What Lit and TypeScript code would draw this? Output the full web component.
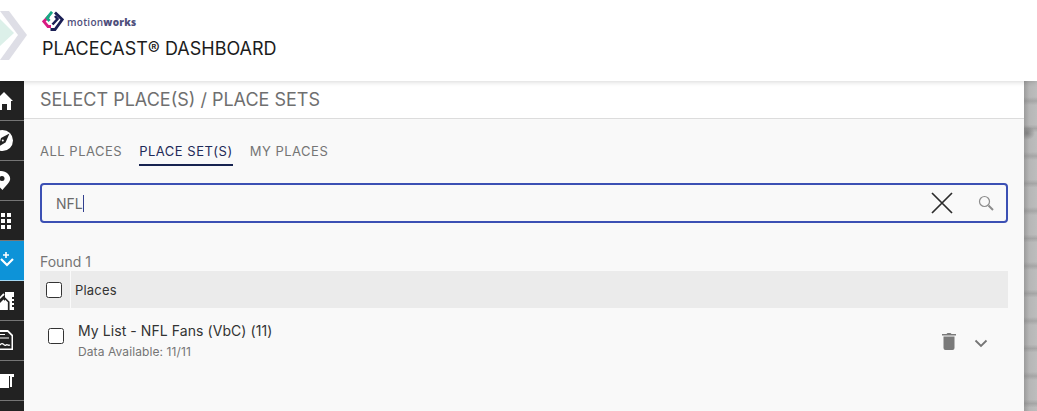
import { LitElement, html, css, svg } from "lit";
import { customElement } from "lit/decorators.js";

const navIcons = [
  svg`<path d="M-4 19 L4 11 L13 20 L11 20 L11 29 L7 29 L7 23 L2 23 L2 29 L-2 29 Z" fill="#fff"/>`,
  svg`<circle cx="2.500" cy="19.500" r="10.500" fill="#fff"/><path d="M9.500 12.500 L5.500 21.500 L-1.500 25.500 L1 17 Z" fill="#222"/><circle cx="2.800" cy="19.500" r="1" fill="#fff"/>`,
  svg`<path d="M1 10 C-5 10 -6 16 -5 19 C-4 22 -1 26 2.500 29 C5 26 9 22 10 19 C11 15 7 10 1 10 Z" fill="#fff"/><circle cx="2" cy="17.500" r="2.500" fill="#222"/>`,
  svg`<g fill="#fff"><rect x="1" y="12" width="4" height="4"/><rect x="7" y="12" width="4" height="4"/><rect x="1" y="18" width="4" height="4"/><rect x="7" y="18" width="4" height="4"/><rect x="1" y="24" width="4" height="4"/><rect x="7" y="24" width="4" height="4"/></g>`,
  svg`<path d="M1 18 L7 24 L13 18" fill="none" stroke="#fff" stroke-width="2.200"/><path d="M6 11 V17 M3 14 H9" stroke="#fff" stroke-width="1.600"/>`,
  svg`<path d="M5 11 H14 V29 H5 Z" fill="#fff"/><path d="M-1 18 L4 13" stroke="#fff" stroke-width="1.800"/><path d="M-1 23 L3.500 18.500 L7 22 V29 H-1 Z" fill="#fff"/><path d="M-1 20.500 L3.500 16 L8.700 21 V29" fill="none" stroke="#222" stroke-width="1.700"/><g fill="#222"><rect x="12" y="16" width="2" height="2"/><rect x="12" y="20" width="2" height="2"/><rect x="12" y="24" width="2" height="2"/></g>`,
  svg`<path d="M-1 9 H8 L13 14 V29 H-1 Z" fill="#fff"/><path d="M0 11 H7.500 L11.500 15 V27.500 H0 Z" fill="#222"/><path d="M0 13.500 H5 M0 17 H9" stroke="#fff" stroke-width="1.200"/><path d="M0 24 C3 20 4 26 6 24 C7 23 8 25 10 24" stroke="#fff" stroke-width="1.300" fill="none"/>`,
  svg`<path d="M0 13 H14 V16 H12 V26 H10 V24 H9 V27 H0 Z" fill="#fff"/><rect x="9" y="15" width="1" height="9" fill="#222"/>`,
];

@customElement("app-root")
export class AppRoot extends LitElement {
  static styles = css`
    :host {
      display: block;
      width: 1037px;
      height: 411px;
      overflow: hidden;
      position: relative;
      font-family: Inter, "Liberation Sans", sans-serif;
      background: #b5b5b5;
    }
    * { box-sizing: border-box; }
    .header {
      height: 81px;
      background: #fff;
      position: relative;
      z-index: 2;
      padding: 11px 0 0 42px;
      box-shadow: 0 1px 5px rgba(0, 0, 0, 0.16);
      overflow: hidden;
    }
    .watermark { position: absolute; left: 0; top: 0; }
    .brand { display: flex; align-items: center; gap: 3px; height: 21px; position: relative; }
    .brand-name {
      font-size: 10px;
      letter-spacing: 0.25px;
      color: #4f4f7c;
      font-family: "Open Sans", "Liberation Sans", sans-serif;
      font-weight: 600;
    }
    .brand-name b { font-weight: 800; }
    .title {
      position: relative;
      margin-top: 7px;
      font-size: 18px;
      line-height: 20px;
      color: #1c1c1c;
    }
    .body { display: flex; height: 330px; }
    .rail { width: 24px; background: #222; flex: none; display: flex; flex-direction: column; }
    .nav {
      height: 40px;
      flex: none;
      border-bottom: 1px solid #757575;
      overflow: hidden;
    }
    .nav.active { background: #0d93d8; border-bottom-color: #a6d8f2; }
    .nav svg { display: block; }
    .panel { width: 1000px; flex: none; background: #f9f9f9; display: flex; flex-direction: column; }
    .panel-head {
      height: 38px;
      background: #fff;
      border-bottom: 1px solid #dcdcdc;
      padding: 9px 0 0 16px;
      font-size: 18px;
      line-height: 20px;
      color: #6f6f6f;
      white-space: nowrap;
    }
    .tabs { display: flex; gap: 17px; padding: 22px 0 0 16px; height: 64px; }
    .tab {
      font-size: 13px;
      line-height: 20px;
      height: 25px;
      color: #757575;
      letter-spacing: 0.5px;
      white-space: nowrap;
    }
    .tab.active { color: #1f2a58; border-bottom: 2px solid #172350; }
    .search {
      margin-left: 16px;
      width: 968px;
      height: 40px;
      border: 2px solid #3c50b4;
      border-radius: 4px;
      display: flex;
      align-items: center;
      padding: 0 12px 0 14px;
    }
    .query { font-size: 14px; color: #6a6a6a; display: flex; align-items: center; flex: 1; }
    .caret { width: 1px; height: 17px; background: #33408f; }
    .clear { margin-right: 25px; display: block; }
    .lens { display: block; }
    .found {
      margin: 31px 0 0 16px;
      font-size: 14px;
      line-height: 16px;
      color: #757575;
    }
    .table-head {
      margin: 1px 0 0 16px;
      width: 968px;
      height: 37px;
      background: #ebebeb;
      display: flex;
      align-items: center;
      flex: none;
    }
    .check-cell {
      width: 31px;
      height: 100%;
      border-right: 1px solid #fafafa;
      display: flex;
      align-items: center;
      padding-left: 6px;
      flex: none;
    }
    .check {
      width: 16px;
      height: 16px;
      border: 1.2px solid #333;
      border-radius: 2.500px;
      background: #fff;
      flex: none;
    }
    .places { margin-left: 4px; font-size: 13px; color: #333; letter-spacing: 0.2px; }
    .row { margin-left: 24px; width: 960px; display: flex; align-items: flex-start; flex: none; }
    .row .check { margin-top: 20px; }
    .row-text { margin: 14px 0 0 14px; flex: 1; }
    .row-title { font-size: 14px; line-height: 18px; color: #333; letter-spacing: 0.07px; }
    .row-sub { font-size: 12px; line-height: 14px; margin-top: 5px; color: #757575; letter-spacing: 0.1px; }
    .trash { display: block; margin: 23px 17px 0 0; }
    .chevron { display: block; margin: 31px 20px 0 0; }
    .map {
      flex: 1;
      background:
        radial-gradient(ellipse 8px 7px at 3px 52px, rgba(90, 90, 90, 0.55), transparent),
        repeating-linear-gradient(180deg, rgba(110, 110, 110, 0) 0, rgba(110, 110, 110, 0.28) 4px, rgba(110, 110, 110, 0) 8px, rgba(110, 110, 110, 0) 27.500px),
        linear-gradient(90deg, #9c9c9c, #b6b6b6 40%, #bdbdbd);
      background-position: 0 0, 0 71px, 0 0;
    }
  `;

  render() {
    return html`
      <div class="header">
        <svg class="watermark" width="36" height="70" viewBox="0 0 36 70">
          <path d="M0 11 H9 L27 35 L9 60 H0 L18 35 Z" fill="#dedee6"/>
          <path d="M0 19 L14 33 L0 46 Z" fill="#dcf0e9"/>
        </svg>
        <div class="brand">
          <svg width="22" height="21" viewBox="0 0 22 21">
            <path d="M7 5 L1.800 10.500 L6 15.500 H9" fill="none" stroke="#d81b82" stroke-width="2.800"/>
            <path d="M10 0.800 L5 7 L7.500 10" fill="none" stroke="#18a884" stroke-width="2.800"/>
            <path d="M13 1.500 L20.300 8.500 L13 18.500 H8.500" fill="none" stroke="#1b1f55" stroke-width="2.800"/>
            <path d="M13 5 L15.500 8 L10.500 13.500" fill="none" stroke="#1b1f55" stroke-width="2.600"/>
          </svg>
          <span class="brand-name">motion<b>works</b></span>
        </div>
        <div class="title">PLACECAST® DASHBOARD</div>
      </div>
      <div class="body">
        <div class="rail">
          ${navIcons.map(
            (icon, i) => html`
              <div class="nav ${i === 4 ? "active" : ""}">
                <svg width="24" height="39" viewBox="0 0 24 39">${icon}</svg>
              </div>
            `
          )}
        </div>
        <div class="panel">
          <div class="panel-head">SELECT PLACE(S) / PLACE SETS</div>
          <div class="tabs">
            <div class="tab">ALL PLACES</div>
            <div class="tab active">PLACE SET(S)</div>
            <div class="tab">MY PLACES</div>
          </div>
          <div class="search">
            <div class="query">NFL<span class="caret"></span></div>
            <svg class="clear" width="22" height="22" viewBox="0 0 22 22">
              <path d="M1 1 L21 21 M21 1 L1 21" stroke="#2b2b2b" stroke-width="1.700"/>
            </svg>
            <svg class="lens" width="16" height="16" viewBox="0 0 16 16">
              <circle cx="6.500" cy="6.500" r="5" fill="none" stroke="#8c8c8c" stroke-width="1.200"/>
              <path d="M10.500 10.500 L15 15" stroke="#8c8c8c" stroke-width="2"/>
            </svg>
          </div>
          <div class="found">Found 1</div>
          <div class="table-head">
            <div class="check-cell"><div class="check"></div></div>
            <div class="places">Places</div>
          </div>
          <div class="row">
            <div class="check"></div>
            <div class="row-text">
              <div class="row-title">My List - NFL Fans (VbC) (11)</div>
              <div class="row-sub">Data Available: 11/11</div>
            </div>
            <svg class="trash" width="16" height="20" viewBox="0 0 16 20">
              <path d="M1 3 H5.500 L6.500 2 H9.500 L10.500 3 H15 V4.500 H1 Z M2.500 5.500 H13.500 V17 Q13.500 19 11.500 19 H4.500 Q2.500 19 2.500 17 Z" fill="#7a7a7a"/>
            </svg>
            <svg class="chevron" width="14" height="9" viewBox="0 0 14 9">
              <path d="M1.500 1.500 L7 7 L12.500 1.500" fill="none" stroke="#757575" stroke-width="1.800"/>
            </svg>
          </div>
        </div>
        <div class="map"></div>
      </div>
    `;
  }
}
